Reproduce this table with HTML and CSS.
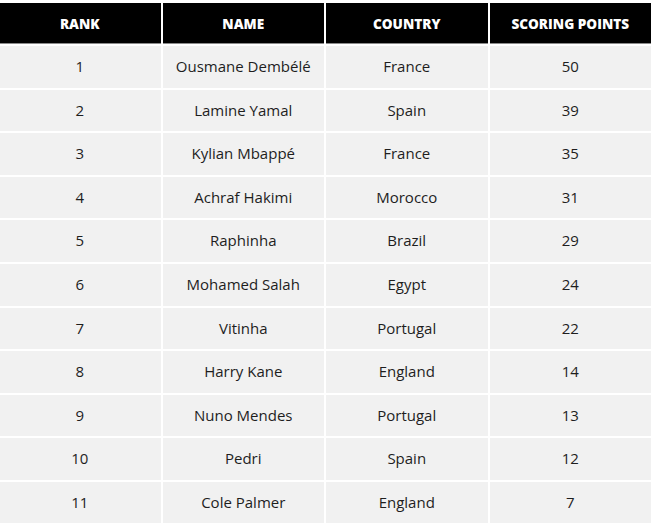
FILE: index.html
```html
<!DOCTYPE html>
<html>
<head>
<meta charset="utf-8">
<link rel="stylesheet" href="styles.css">
</head>
<body>
<table class="ranking">
  <thead>
    <tr><th>Rank</th><th>Name</th><th>Country</th><th>Scoring Points</th></tr>
  </thead>
  <tbody>
    <tr><td>1</td><td>Ousmane Dembélé</td><td>France</td><td>50</td></tr>
    <tr><td>2</td><td>Lamine Yamal</td><td>Spain</td><td>39</td></tr>
    <tr><td>3</td><td>Kylian Mbappé</td><td>France</td><td>35</td></tr>
    <tr><td>4</td><td>Achraf Hakimi</td><td>Morocco</td><td>31</td></tr>
    <tr><td>5</td><td>Raphinha</td><td>Brazil</td><td>29</td></tr>
    <tr><td>6</td><td>Mohamed Salah</td><td>Egypt</td><td>24</td></tr>
    <tr><td>7</td><td>Vitinha</td><td>Portugal</td><td>22</td></tr>
    <tr><td>8</td><td>Harry Kane</td><td>England</td><td>14</td></tr>
    <tr><td>9</td><td>Nuno Mendes</td><td>Portugal</td><td>13</td></tr>
    <tr><td>10</td><td>Pedri</td><td>Spain</td><td>12</td></tr>
    <tr><td>11</td><td>Cole Palmer</td><td>England</td><td>7</td></tr>
  </tbody>
</table>
</body>
</html>
```
FILE: styles.css
```css
html, body {
  margin: 0;
  padding: 0;
  background: #ffffff;
  overflow: hidden;
}
body {
  font-family: "Open Sans", "Liberation Sans", sans-serif;
}
.ranking {
  border-collapse: separate;
  border-spacing: 2px;
  margin: 1px 0 0 -3px;
  width: 656px;
  table-layout: fixed;
}
.ranking th {
  background: #000000;
  color: #ffffff;
  font-weight: 800;
  font-size: 13.6px;
  text-transform: uppercase;
  height: 41px;
  padding: 0 6px;
  box-sizing: border-box;
  border-bottom: 1px solid #8a8a8a;
  text-align: center;
  vertical-align: middle;
}
.ranking td {
  background: #f1f1f1;
  color: #1e1e1e;
  font-size: 15px;
  line-height: 21.6px;
  padding: 10px 6px;
  text-align: center;
}
```
